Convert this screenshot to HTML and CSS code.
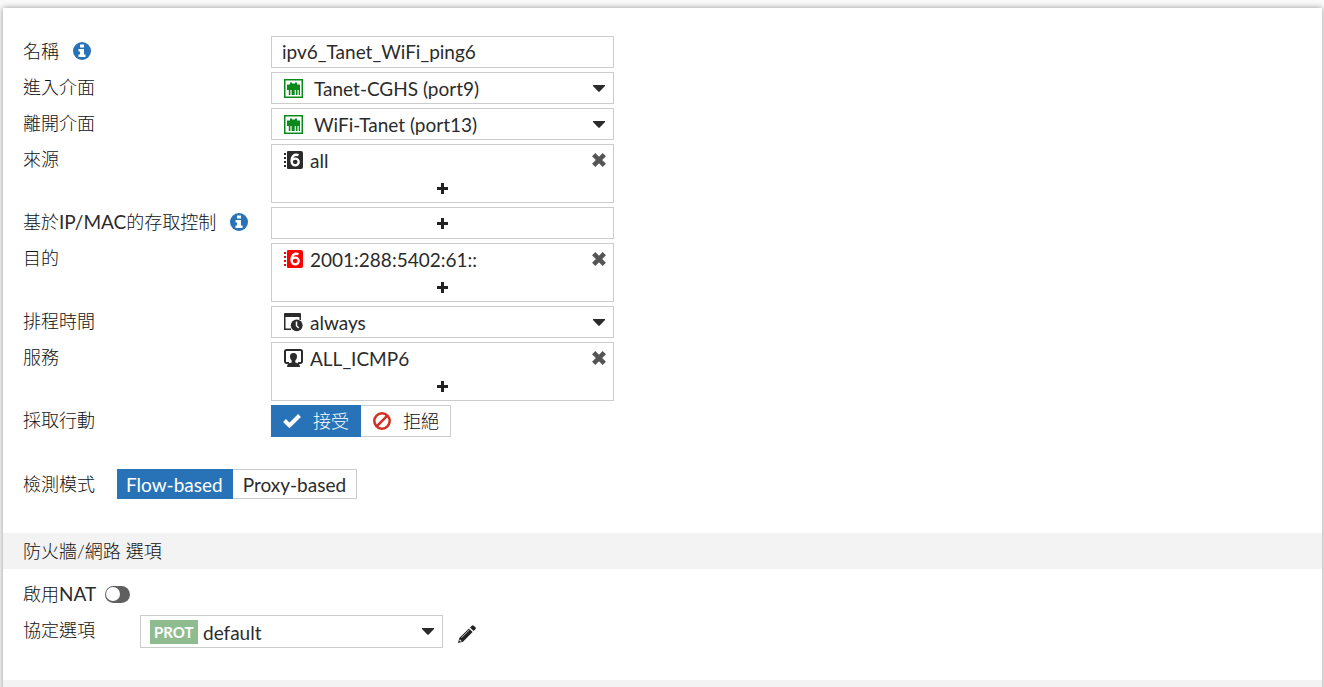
FILE: index.html
```html
<!DOCTYPE html>
<html lang="zh-Hant">
<head>
<meta charset="utf-8">
<meta name="viewport" content="width=device-width, initial-scale=1">
<title>ipv6_Tanet_WiFi_ping6</title>
<link rel="stylesheet" href="styles.css">
</head>
<body>
<svg class="sprite" aria-hidden="true">
  <symbol id="info" viewBox="0 0 18 18"><circle cx="9" cy="9" r="9" fill="#2873b8"/><path fill="#fff" d="M7 2.500h4v3H7zM5.500 7H11v5.500h1.500V15h-7v-2.500H7v-3H5.500z"/></symbol>
  <symbol id="port" viewBox="0 0 19 19"><path fill="#0b8a1c" fill-rule="evenodd" d="M0 0h19v19H0zM1.500 1.500v16h16v-16z"/><path fill="#0b8a1c" d="M3 5.500h3V3.500h2v1h3v-1h2v2h3V16h-1.300v-5h-1.200v5h-1.600v-5h-1.200v5h-1.600v-5H9.200v5H7.600v-5H6.400v5H4.800v-5H3z"/></symbol>
  <symbol id="book" viewBox="0 0 19 19"><path fill="currentColor" d="M0 2h2v2H0zM0 6h2v2H0zM0 10h2v2H0zM0 14h2v2H0zM4 0h13a2 2 0 0 1 2 2v14a2 2 0 0 1-2 2H4a1 1 0 0 1-1-1V1a1 1 0 0 1 1-1z"/><path fill="none" stroke="#fff" stroke-width="2.400" d="M14.500 4.200C10 2.900 7.600 5 7.600 10.500"/><ellipse cx="11.200" cy="11" rx="3.500" ry="3.300" fill="none" stroke="#fff" stroke-width="2.300"/></symbol>
  <symbol id="schedule" viewBox="0 0 19 19"><path fill="#2b2b2b" d="M1 0h15a1 1 0 0 1 1 1v3H0V1a1 1 0 0 1 1-1z"/><path fill="none" stroke="#2b2b2b" stroke-width="1.500" d="M.75 3v13.200H7M16.200 3v4"/><circle cx="12.700" cy="12.300" r="5.900" fill="#2b2b2b"/><path fill="none" stroke="#fff" stroke-width="1.500" d="M12.500 8.500v4.200l2.200 2.300"/></symbol>
  <symbol id="service" viewBox="0 0 19 19"><path fill="none" stroke="#2b2b2b" stroke-width="2" d="M5 14H2.500A1.500 1.500 0 0 1 1 12.500V2.500A1.500 1.500 0 0 1 2.500 1h14A1.500 1.500 0 0 1 18 2.500v10a1.500 1.500 0 0 1-1.500 1.500H14"/><path fill="#2b2b2b" d="M9.500 4C12 4 13 5.500 13 7.500S12 11 11.300 11.500v2c2.700.5 4.700 1.500 4.700 4.500H3c0-3 2-4 4.700-4.500v-2C7 11 6 9.500 6 7.500S7 4 9.500 4z"/></symbol>
  <symbol id="caret" viewBox="0 0 12 7"><path fill="#2b2b2b" d="M0 0h12v1L6.500 6.700h-1L0 1z"/></symbol>
  <symbol id="cross" viewBox="0 0 14 14"><path fill="none" stroke="#555" stroke-width="4.600" d="M1.700 1.700l10.600 10.600M12.300 1.700L1.700 12.300"/></symbol>
  <symbol id="plus" viewBox="0 0 11 11"><path fill="#222" d="M4 0h3v4h4v3H7v4H4V7H0V4h4z"/></symbol>
  <symbol id="check" viewBox="0 0 18 14"><path fill="none" stroke="#fff" stroke-width="4" d="M1.500 6.500l5 5L16.500 1.500"/></symbol>
  <symbol id="deny" viewBox="0 0 18 18"><circle cx="9" cy="9" r="7.700" fill="none" stroke="#d33022" stroke-width="2.500"/><path stroke="#d33022" stroke-width="2.500" d="M14.300 3.700L3.700 14.300"/></symbol>
  <symbol id="pencil" viewBox="0 0 18 18"><path fill="#222" d="M12 2.500l1.800-1.800q1-1 2 0l1.600 1.600q1 1 0 2L15.600 6zM11 3.500l3.600 3.600L5 16.700 0 18l1.300-5z"/><path fill="none" stroke="#fff" stroke-width=".7" d="M3.500 12.700l8-8"/><path fill="#fff" d="M1.800 14.200l2 2-1.600.4-.8-.8z"/></symbol>
</svg>
<main class="panel">
  <form class="policy">
    <div class="fields">
      <div class="caption"><label for="name">名稱</label><svg class="info"><use href="#info"/></svg></div>
      <input class="box text" id="name" type="text" value="ipv6_Tanet_WiFi_ping6">

      <label class="caption" for="incoming">進入介面</label>
      <div class="box picker">
        <select class="wide-gap" id="incoming"><option>Tanet-CGHS (port9)</option></select>
        <svg class="icon"><use href="#port"/></svg><svg class="caret"><use href="#caret"/></svg>
      </div>

      <label class="caption" for="outgoing">離開介面</label>
      <div class="box picker">
        <select class="wide-gap" id="outgoing"><option>WiFi-Tanet (port13)</option></select>
        <svg class="icon"><use href="#port"/></svg><svg class="caret"><use href="#caret"/></svg>
      </div>

      <div class="caption">來源</div>
      <div class="box list">
        <div class="entry"><svg class="icon"><use href="#book"/></svg><span class="value">all</span><button class="remove" type="button" aria-label="移除 all"><svg><use href="#cross"/></svg></button></div>
        <button class="add" type="button" aria-label="新增來源"><svg><use href="#plus"/></svg></button>
      </div>

      <div class="caption"><span>基於<span class="latin">IP/MAC</span>的存取控制</span><svg class="info"><use href="#info"/></svg></div>
      <div class="box list">
        <button class="add" type="button" aria-label="新增存取控制"><svg><use href="#plus"/></svg></button>
      </div>

      <div class="caption">目的</div>
      <div class="box list">
        <div class="entry"><svg class="icon red"><use href="#book"/></svg><span class="value">2001:288:5402:61::</span><button class="remove" type="button" aria-label="移除 2001:288:5402:61::"><svg><use href="#cross"/></svg></button></div>
        <button class="add" type="button" aria-label="新增目的"><svg><use href="#plus"/></svg></button>
      </div>

      <label class="caption" for="schedule">排程時間</label>
      <div class="box picker">
        <select id="schedule"><option>always</option></select>
        <svg class="icon"><use href="#schedule"/></svg><svg class="caret"><use href="#caret"/></svg>
      </div>

      <div class="caption">服務</div>
      <div class="box list">
        <div class="entry"><svg class="icon"><use href="#service"/></svg><span class="value">ALL_ICMP6</span><button class="remove" type="button" aria-label="移除 ALL_ICMP6"><svg><use href="#cross"/></svg></button></div>
        <button class="add" type="button" aria-label="新增服務"><svg><use href="#plus"/></svg></button>
      </div>

      <div class="caption" id="action">採取行動</div>
      <div class="segments" role="radiogroup" aria-labelledby="action">
        <label class="segment"><input type="radio" name="action" checked><svg class="check"><use href="#check"/></svg><span>接受</span></label>
        <label class="segment"><input type="radio" name="action"><svg class="deny"><use href="#deny"/></svg><span>拒絕</span></label>
      </div>
    </div>

    <div class="line mode">
      <div class="caption" id="mode">檢測模式</div>
      <div class="segments compact" role="radiogroup" aria-labelledby="mode">
        <label class="segment"><input type="radio" name="mode" checked><span>Flow-based</span></label>
        <label class="segment"><input type="radio" name="mode"><span>Proxy-based</span></label>
      </div>
    </div>

    <h2 class="section">防火牆/網路 選項</h2>
    <div class="options">
      <div class="line nat">
        <label class="caption" for="nat"><span>啟用<span class="latin">NAT</span></span></label>
        <input class="toggle" id="nat" type="checkbox" role="switch">
      </div>
      <div class="line protocol">
        <label class="caption" for="protocol">協定選項</label>
        <div class="box picker">
          <select class="tagged" id="protocol"><option>default</option></select>
          <span class="tag">PROT</span><svg class="caret"><use href="#caret"/></svg>
        </div>
        <button class="edit" type="button" aria-label="編輯"><svg><use href="#pencil"/></svg></button>
      </div>
    </div>
    <div class="section"></div>
  </form>
</main>
</body>
</html>
```
FILE: styles.css
```css
* { box-sizing: border-box; }

body {
  height: 100vh;
  margin: 0;
  padding: 8px 2px 0 3px;
  overflow: hidden;
  background: #f9f9f9;
  color: #2b2b2b;
  font: 19px/24px Lato, "Noto Sans CJK TC", sans-serif;
}

button, input, select { color: inherit; font: inherit; }

button {
  display: flex;
  align-items: center;
  justify-content: center;
  padding: 0;
  border: 0;
  background: none;
  cursor: pointer;
}

svg { display: block; flex: none; }

.sprite { position: absolute; width: 0; height: 0; }

.panel {
  min-height: 100%;
  background: #fff;
  box-shadow: 0 0 6px rgba(0, 0, 0, 0.4);
}

.policy { padding-top: 28px; }

.fields {
  display: grid;
  grid-template-columns: 248px minmax(0, 343px);
  gap: 4px 0;
  padding: 0 20px;
}

.caption {
  display: flex;
  align-items: center;
  gap: 14px;
  height: 30px;
  color: #111;
  font-size: 18px;
  font-weight: 300;
  white-space: nowrap;
}

.latin { color: #2b2b2b; font-size: 19px; font-weight: 400; }

.info { width: 18px; height: 18px; }

.box {
  width: 100%;
  min-height: 32px;
  border: 1px solid #ccc;
  border-radius: 0;
  background: #fff;
}

.text { padding: 0 10px; outline: 0; }

.picker { display: grid; align-items: center; }

.picker > * { grid-area: 1 / 1; pointer-events: none; }

.picker select {
  width: 100%;
  height: 30px;
  padding: 2px 30px 0 38px;
  border: 0;
  outline: 0;
  background: none;
  appearance: none;
  pointer-events: auto;
}

.picker .wide-gap { padding-left: 42px; }

.picker .tagged { padding-left: 62px; }

.icon { width: 19px; height: 19px; margin-left: 12px; }

.red { color: #f00; }

.caret {
  justify-self: end;
  width: 12px;
  height: 7px;
  margin-right: 8px;
}

.list { display: flex; flex-direction: column; }

.entry { display: flex; align-items: center; height: 30px; padding-right: 7px; }

.value { flex: 1; padding: 1px 0 0 7px; }

.remove, .remove svg { width: 14px; height: 14px; }

.add { height: 27px; }

.add:only-child { height: 30px; }

.add svg { width: 11px; height: 11px; }

.segments { display: flex; }

.segment {
  display: flex;
  align-items: center;
  gap: 12px;
  height: 32px;
  padding: 0 11px 0 12px;
  border: 1px solid #ccc;
  border-left: 0;
  color: #111;
  font-size: 18px;
  font-weight: 300;
  white-space: nowrap;
  cursor: pointer;
}

.segment input { position: absolute; opacity: 0; pointer-events: none; }

.segment:has(:checked) {
  border-color: #2873b8;
  background: #2873b8;
  color: #fff;
}

.check { width: 18px; height: 14px; }

.deny { width: 18px; height: 18px; }

.compact .segment {
  height: 30px;
  padding: 2px 10px 0;
  color: #2b2b2b;
  font-size: 19px;
  font-weight: 400;
}

.compact .segment:has(:checked) { padding: 2px 9px 0; color: #fff; }

.line { display: flex; padding: 0 20px; }

.mode { gap: 22px; margin: 32px 0 34px; }

.section {
  height: 36px;
  margin: 0;
  padding: 6px 20px;
  background: #f3f3f3;
  color: #111;
  font-size: 18px;
  font-weight: 300;
}

.options { padding: 10px 0 32px; }

.nat { align-items: center; gap: 9px; margin-bottom: 6px; }

.toggle {
  display: flex;
  align-items: center;
  width: 25px;
  height: 17px;
  margin: 0;
  padding: 1px;
  border-radius: 9px;
  background: #5f5f5f;
  appearance: none;
}

.toggle::before {
  content: "";
  width: 14px;
  height: 14px;
  border-radius: 50%;
  background: #fff;
}

.toggle:checked { justify-content: flex-end; }

.protocol .caption { width: 117px; }

.protocol .box { width: 303px; height: 33px; }

.tag {
  justify-self: start;
  margin-left: 9px;
  padding: 0 4px;
  background: #8fbc8f;
  color: #fff;
  font-size: 15px;
  font-weight: 700;
}

.edit { width: 18px; margin: 4px 0 0 15px; }

.edit svg { width: 18px; height: 18px; }
```
